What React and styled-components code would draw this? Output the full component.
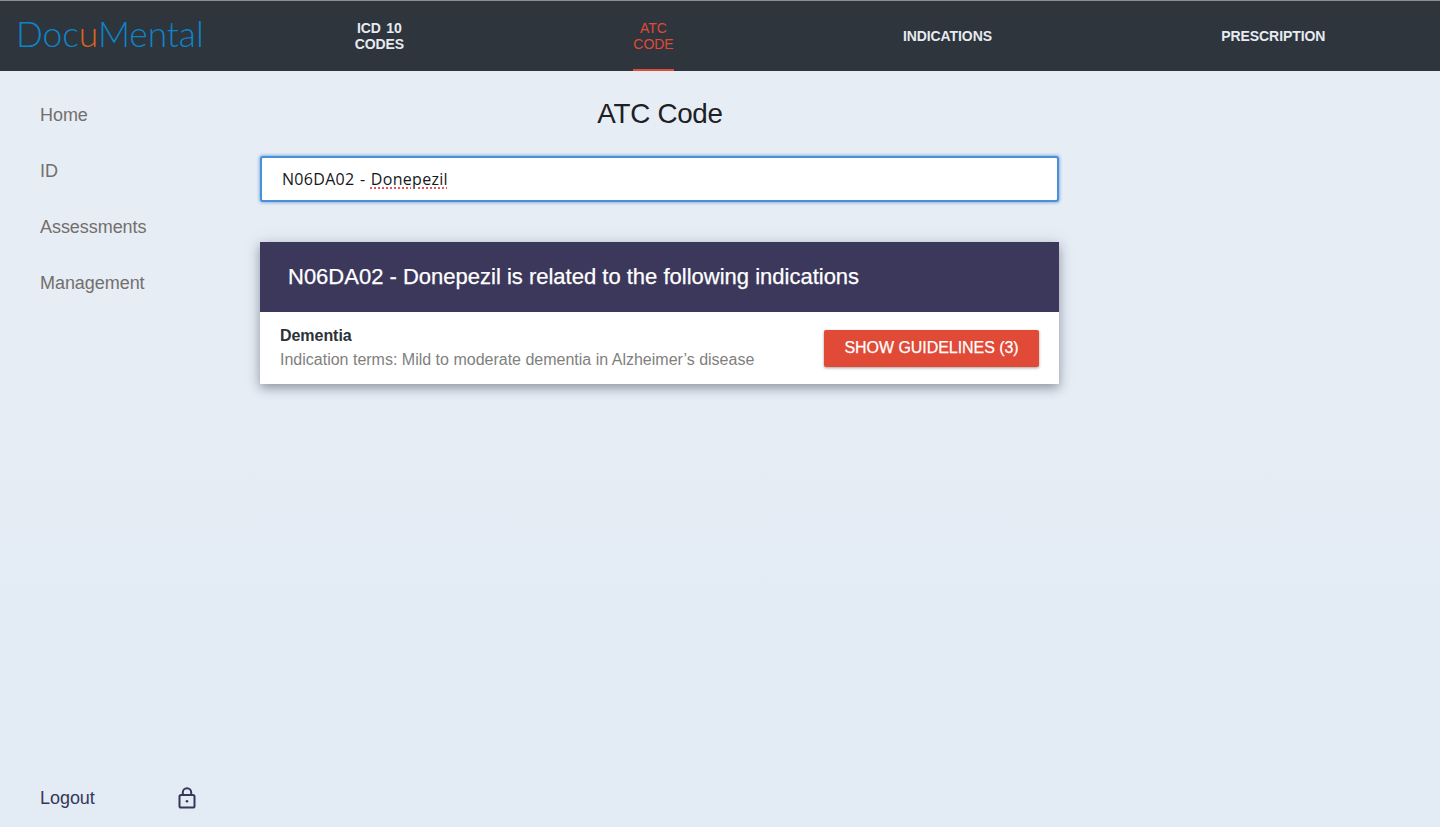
import React from "react";
import styled, { createGlobalStyle } from "styled-components";

const Global = createGlobalStyle`
  html, body { margin: 0; padding: 0; height: 100%; }
  body { background: linear-gradient(#e6edf5 0, #e6edf5 380px, #e3ebf4 620px); font-family: "Liberation Sans", Arial, sans-serif; overflow: hidden; }
  * { box-sizing: border-box; }
`;
const Page = styled.div`display: flex; flex-direction: column; height: 827px;`;
const Header = styled.header`
  display: flex; height: 71px; flex: none; background: #2e353d; border-top: 1px solid #8d8f91;
`;
const LogoBox = styled.div`
  width: 240px; flex: none; padding: 11px 0 0 16px;
`;
const Logo = styled.div`
  font-family: Lato, sans-serif; font-weight: 300; font-size: 35.4px; line-height: 44px; color: #0d84c8; letter-spacing: -0.1px;
  span { color: #d9641f; }
`;
const Nav = styled.nav`display: flex; flex: 1;`;
const Tab = styled.a`
  flex: 1 1 auto; display: flex; justify-content: center; align-items: stretch;
`;
const TabLabel = styled.span`
  display: flex; align-items: center; text-align: center; height: 70px; padding-top: 1px;
  font-size: 14px; line-height: 16px; font-weight: ${p => (p.$active ? 400 : 700)};
  letter-spacing: ${p => (p.$active ? "-0.05px" : "-0.08px")};
  word-spacing: 1.5px;
  color: ${p => (p.$active ? "#e04a36" : "#e6ebf2")};
  border-bottom: 2px solid ${p => (p.$active ? "#e04a36" : "transparent")};
`;
const Body = styled.div`display: flex; flex: 1; min-height: 0;`;
const Side = styled.aside`
  width: 240px; flex: none; display: flex; flex-direction: column; justify-content: space-between;
  padding: 32px 44px 17px 40px;
`;
const SideList = styled.div`display: flex; flex-direction: column; gap: 32px;`;
const SideLink = styled.a`
  font-size: 18px; line-height: 24px; color: #736f6d; letter-spacing: -0.05px;
`;
const LogoutRow = styled.div`display: flex; align-items: center; justify-content: space-between;`;
const LogoutText = styled.a`font-size: 18px; line-height: 24px; color: #37375a; letter-spacing: -0.05px;`;
const Main = styled.main`width: 840px; padding: 0 20px; flex: none;`;
const Title = styled.h1`
  margin: 24px 0 24px; font-weight: 400; font-size: 27.8px; line-height: 37px; text-align: center; color: #1d2024; letter-spacing: -0.3px;
`;
const SearchField = styled.div`
  display: flex; align-items: center; width: 799px; height: 46px; padding: 0 20px; background: #fff;
  border: 2px solid #4a90d6; border-radius: 3px;
  box-shadow: 0 0 3px 1px rgba(90,150,225,.65);
  font-family: "Open Sans", sans-serif; font-size: 16px; letter-spacing: 0.3px; word-spacing: 1px; color: #15171a; white-space: pre;
`;
const Misspelled = styled.span`
  text-decoration: underline dotted #e8555e 2px; text-underline-offset: 2px;
`;
const Card = styled.section`
  margin-top: 40px; width: 799px; background: #fff;
  box-shadow: 0 4px 10px rgba(40,45,60,.42), 0 0 20px rgba(60,70,100,.08);
`;
const CardHead = styled.h2`
  margin: 0; height: 70px; display: flex; align-items: center; padding: 0 28px;
  background: #3c385c; color: #fff; font-size: 22px; font-weight: 400; letter-spacing: 0;
  -webkit-text-stroke: .25px #fff;
`;
const CardRow = styled.div`
  height: 72px; display: flex; align-items: center; justify-content: space-between; padding: 0 20px;
`;
const RowText = styled.div`display: flex; flex-direction: column; padding-bottom: 1px;`;
const RowTitle = styled.strong`font-size: 16px; line-height: 24px; color: #2b3138; letter-spacing: -0.05px;`;
const RowSub = styled.span`font-size: 16px; line-height: 24px; color: #807f7e;`;
const Button = styled.button`
  width: 215px; height: 37px; border: 0; border-radius: 2px; padding: 0; background: #e04a36; color: #fff;
  font-family: inherit; font-size: 16px; font-weight: 400; letter-spacing: -0.05px;
  -webkit-text-stroke: .25px #fff;
  box-shadow: 0 1px 3px rgba(0,0,0,.38);
`;

const LockIcon = () => (
  <svg width="18" height="22" viewBox="0 0 18 22" fill="none" stroke="#37375a" strokeWidth="2">
    <rect x="1.5" y="8" width="15" height="12.5" rx="1.6" />
    <path d="M4.8 8V5.4a4.2 4.2 0 0 1 8.4 0V8" />
    <circle cx="9" cy="14.2" r="1.3" fill="#37375a" stroke="none" />
  </svg>
);

export default function App() {
  return (
    <Page>
      <Global />
      <Header>
        <LogoBox><Logo>Doc<span>u</span>Mental</Logo></LogoBox>
        <Nav>
          <Tab><TabLabel>ICD 10<br />CODES</TabLabel></Tab>
          <Tab><TabLabel $active>ATC<br />CODE</TabLabel></Tab>
          <Tab><TabLabel>INDICATIONS</TabLabel></Tab>
          <Tab><TabLabel>PRESCRIPTION</TabLabel></Tab>
        </Nav>
      </Header>
      <Body>
        <Side>
          <SideList>
            <SideLink>Home</SideLink>
            <SideLink>ID</SideLink>
            <SideLink>Assessments</SideLink>
            <SideLink>Management</SideLink>
          </SideList>
          <LogoutRow>
            <LogoutText>Logout</LogoutText>
            <LockIcon />
          </LogoutRow>
        </Side>
        <Main>
          <Title>ATC Code</Title>
          <SearchField>N06DA02 - <Misspelled>Donepezil</Misspelled></SearchField>
          <Card>
            <CardHead>N06DA02 - Donepezil is related to the following indications</CardHead>
            <CardRow>
              <RowText>
                <RowTitle>Dementia</RowTitle>
                <RowSub>Indication terms: Mild to moderate dementia in Alzheimer’s disease</RowSub>
              </RowText>
              <Button>SHOW GUIDELINES (3)</Button>
            </CardRow>
          </Card>
        </Main>
      </Body>
    </Page>
  );
}
